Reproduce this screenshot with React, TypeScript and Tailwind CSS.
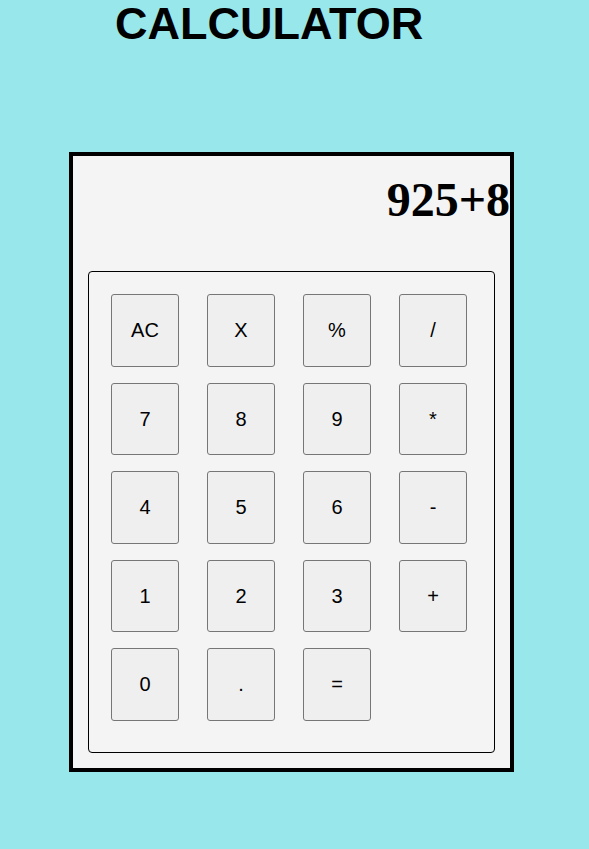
import React, { useState } from 'react';

const keys = ['AC', 'X', '%', '/', '7', '8', '9', '*', '4', '5', '6', '-', '1', '2', '3', '+', '0', '.', '='];

const App: React.FC = () => {
    const [display] = useState('925+8');

    return (
        <div className="min-h-[849px] w-full bg-[#98e7eb] font-['Liberation_Sans',Arial,sans-serif]">
            <h1 className="pl-[115px] text-[45px] font-bold leading-[48px] text-black">CALCULATOR</h1>

            <div className="ml-[69px] mt-[104px] w-[445px] h-[620px] border-4 border-black bg-[#f4f4f4]">
                <div className="h-[115px] pt-[17px] text-right font-['Liberation_Serif','Times_New_Roman',serif] text-[48px] font-bold leading-[53px] text-black">
                    {display}
                </div>
                <div className="mx-[15px] h-[482px] rounded-[4px] border border-black bg-[#f4f4f4] pl-[22px] pt-[22px]">
                    <div className="grid grid-cols-[repeat(4,68px)] gap-x-[28px] gap-y-[16px]">
                        {keys.map((k) => (
                            <button
                                key={k}
                                className="h-[72.5px] w-[68px] rounded-[3px] border border-[#767676] bg-[#efefef] text-[20px] text-black"
                            >
                                {k}
                            </button>
                        ))}
                    </div>
                </div>
            </div>
        </div>
    );
};

export default App;
